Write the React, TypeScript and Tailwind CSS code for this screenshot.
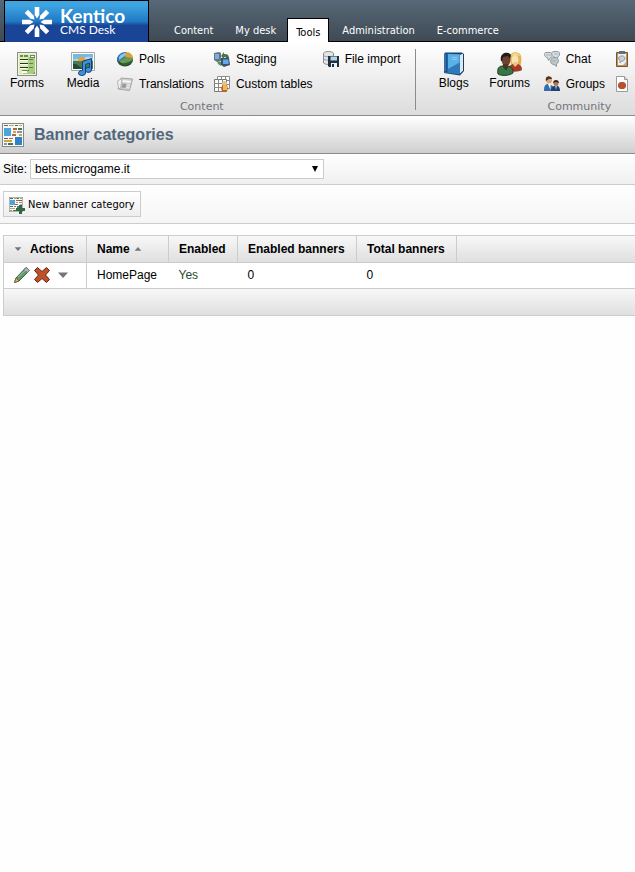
import type { ReactNode } from "react";

const ARIAL = "font-['Liberation_Sans',Arial,sans-serif]";
const TAHOMA = "font-['DejaVu_Sans_Condensed','DejaVu_Sans',Tahoma,sans-serif]";

const TABS = ["Content", "My desk", "Tools", "Administration", "E-commerce"];

function LogoMark() {
  return (
    <svg viewBox="0 0 30 30" className="h-[30px] w-[30px] shrink-0" fill="#fff">
      {[0, 45, 90, 135, 180, 225, 270, 315].map((a) => (
        <path key={a} d="M12.700 0h4.600v8L15 11.500 12.700 8z" transform={`rotate(${a} 15 15)`} />
      ))}
    </svg>
  );
}

function FormsIcon() {
  return (
    <svg viewBox="0 0 20 24" className="h-6 w-5" shapeRendering="crispEdges">
      <path d="M0.5 0.5h19v23h-19z" fill="#f0f3dc" stroke="#8c8f88" />
      <path d="M2 2h16v20H2z" fill="#dcebae" />
      <path d="M11 5h7v17H6v-3h5z" fill="#a8cc80" />
      <path d="M3 3h3v2H3zM7 3h4v2H7z" fill="#6d8a5f" />
      <path d="M13 3h4v2h-4z" fill="#fff" stroke="#6d8a5f" />
      <path d="M3 7h8v1H3zM3 11h8v1H3zM3 15h8v1H3z" fill="#25351f" />
      <path d="M3 8h8v1H3zM3 12h8v1H3zM3 16h6v1H3z" fill="#fff" />
      <path d="M12 7h4v1h-4zM12 11h4v1h-4zM12 15h4v1h-4zM5 18h7v1H5z" fill="#5f8250" />
      <path d="M5 19h5v2H5z" fill="#fff" />
      <path d="M15 22h3v-3z" fill="#7f9b62" />
    </svg>
  );
}

function MediaIcon() {
  return (
    <svg viewBox="0 0 24 24" className="h-6 w-6">
      <path d="M0.5 0.5h23v18h-23z" fill="#fff" stroke="#a5a8ab" />
      <path d="M2 2h20v9H2z" fill="#74b9de" />
      <path d="M2 8c3-3 5 0 8-1s6-4 12-1v4H2z" fill="#b7dbeb" />
      <path d="M7 8c0-4 7-4 8 0v2H7z" fill="#ee9c3a" />
      <path d="M2 9c4-1 6 1 9 0s7-2 11 0v8H2z" fill="#4a7a50" />
      <path d="M2 12c4-1 6 3 10 5H2z" fill="#254a37" />
      <path
        d="M11.500 9.500l9-3v11.500a3 2.500 0 1 1-2-2.500V11l-4 1.500v8.500a3.500 2.500 0 1 1-3-2.500z"
        fill="#3e92db"
        stroke="#153f75"
      />
    </svg>
  );
}

function BlogsIcon() {
  return (
    <svg viewBox="0 0 22 24" className="h-6 w-[22px]">
      <path d="M2 0.500h17l2 1.500v17l-4 4.500-16-2.500z" fill="#17406d" />
      <path d="M17 3l3-1.500v17l-3 3z" fill="#dfe8ee" />
      <path d="M1 1.500L17 2v20.500L1 20.500z" fill="#2f79b8" />
      <path d="M5 2l11.500.5v8L5 17z" fill="#5bb0e6" />
      <path d="M9 5.500h5M9 7.500h5" stroke="#8accf1" />
      <path d="M1 1.500h3.500v19l-3.500-.5z" fill="#1b5288" />
      <path d="M2 2v17" stroke="#4c93ca" />
    </svg>
  );
}

function ForumsIcon() {
  return (
    <svg viewBox="0 0 26 24" className="h-6 w-[26px]">
      <path d="M13 5c0-6 10-6 11-1 1 4 0 8-1 11l-9-1z" fill="#e3b254" />
      <ellipse cx="18" cy="8" rx="3.500" ry="5" fill="#f8e2b0" />
      <path d="M14 4c1-4 8-4 9 0l-5-1z" fill="#f5d886" />
      <path d="M12 14l4-2h5c3 1 4 3 4 6-3 2-9 2-13 1z" fill="#a33b26" />
      <path d="M16 12l2 3 3-3-1-2h-3z" fill="#efc48b" />
      <ellipse cx="9" cy="8" rx="4.500" ry="6" fill="#6f4230" />
      <path d="M4 9C2 0 12-1 14 3l-1 4-2-3-5 1-1 4z" fill="#1f1c1c" />
      <path d="M6 12h5v5l-2 2-3-3z" fill="#553126" />
      <path d="M1 22c-1-6 1-8 5-8l3 4 2-4c4 1 5 3 5 7-4 3-12 3-15 1z" fill="#3b7445" stroke="#1d4025" />
    </svg>
  );
}

function PollsIcon() {
  return (
    <svg viewBox="0 0 16 16" className="h-4 w-4">
      <ellipse cx="8" cy="9" rx="8" ry="6.500" fill="#254c31" />
      <path d="M0 9c0-5 4-8 9-8l1 4-8 6z" fill="#2f74b0" />
      <path d="M2 6c2-3 4-4 7-4l.5 2L2 9z" fill="#8bc6e8" />
      <path d="M9 1c4 0 7 3 7 6l-8 1z" fill="#dda236" />
      <path d="M2 10l7-4 7 1c0 5-9 9-14 3z" fill="#6a9a54" />
      <path d="M4 13l8-2 3-2c-1 5-8 7-11 4z" fill="#315f38" />
    </svg>
  );
}

function TranslationsIcon() {
  return (
    <svg viewBox="0 0 16 16" className="h-4 w-4">
      <path d="M4 2l11.500 1-3 11.500L1 13z" fill="#cfcfcf" stroke="#a5a5a5" />
      <path d="M0.500 5L5 2.500 3.500 13l-2-1z" fill="#f0f0f0" stroke="#b5b5b5" />
      <path d="M6 4l8 1-.4 2-8-1z" fill="#f7f7f7" />
      <path d="M5.500 7.500l4 .5-1 4-4-.5z" fill="#9a9a9a" />
      <path d="M10 9l3 .4M9.500 11.500l3 .4" stroke="#f4f4f4" />
    </svg>
  );
}

function StagingIcon() {
  return (
    <svg viewBox="0 0 16 16" className="h-4 w-4">
      <path d="M0 2l5-1 2 1v8l-4 1-3-2z" fill="#667583" />
      <path d="M1 3h4v5H1z" fill="#7eaedb" />
      <path d="M7 5l3-4v2c4 0 5 1 5 5h-3V6h-2v2z" fill="#44784c" />
      <path d="M7 7l8-.5 1 7.500-6 2-3-2z" fill="#3f5265" />
      <path d="M9 8.500h5.500v4.500H9z" fill="#5eacec" />
      <path d="M3 10l4 1v4l-3-2z" fill="#579459" />
    </svg>
  );
}

function CustomTablesIcon() {
  return (
    <svg viewBox="0 0 16 16" className="h-4 w-4">
      <path d="M3.500 0.500h12v12h-12z" fill="#fff" stroke="#8e8e8e" />
      <path d="M0.500 3.500h12v12H0.500z" fill="#fff" stroke="#777" />
      <path d="M0 7.500h13M0 11.500h13M4.500 3v13M8.500 3v13M7.500 0v3M11.500 0v3M13 4.500h3M13 8.500h3" stroke="#888" />
      <path d="M7 12l2-4 4 1 1 4-2 3H8z" fill="#b9642f" />
      <circle cx="10.500" cy="7.500" r="2.500" fill="#e7c08a" />
      <path d="M9 10h4v4H9z" fill="#f0be46" />
    </svg>
  );
}

function FileImportIcon() {
  return (
    <svg viewBox="0 0 16 16" className="h-4 w-4">
      <path d="M0.500 2c2-2 8-2 10 0v10c-3 2-7 2-10 0z" fill="#e3e5e7" stroke="#8a8e92" />
      <path d="M1 5c3 1 6 1 9 0M1 8.500c3 1 6 1 9 0" stroke="#9da2a7" fill="none" />
      <path d="M5 5h11v11H6l-1-1z" fill="#1f3140" />
      <path d="M7.500 5.500H14v4H7.500z" fill="#b5d3e6" />
      <path d="M8 12h6v4H8z" fill="#eef1f3" />
      <path d="M9 13h2v3H9z" fill="#1f3140" />
    </svg>
  );
}

function ChatIcon() {
  return (
    <svg viewBox="0 0 16 16" className="h-4 w-4" fill="#d9dee1" stroke="#8f989e">
      <path d="M1.500 1.500h5c3 1 2 5 0 5l-2 3-1-3c-3 0-4-4-2-5z" />
      <path d="M9.500 0.500h4c3 0 2.500 5 0 5.500l-1 2.500-2-2.500c-3 0-4-5-1-5.500z" />
      <path d="M7.500 7.500c3-2 7-1 7 2 0 2-1 3-2 3.500v2.500l-2.500-2c-4 0-4-4-2.500-6z" fill="#bcc6cb" />
      <path d="M2 4h5M10 3h4M8 10h4" stroke="#a9b1b6" />
    </svg>
  );
}

function GroupsIcon() {
  return (
    <svg viewBox="0 0 16 16" className="h-4 w-4">
      <circle cx="5" cy="4.500" r="3" fill="#e0a873" />
      <path d="M2 5c-2-6 6-6 6-2L5 3z" fill="#57341f" />
      <path d="M0 15c0-5 1-7 4-7l3 1 3 2v4z" fill="#346eae" />
      <path d="M4 8h2.500v6z" fill="#fff" />
      <circle cx="12" cy="7.500" r="2.500" fill="#b6794c" />
      <path d="M9 7c0-4 6-4 6 0l-3-1z" fill="#33251e" />
      <path d="M7 15c0-4 2-5 4-5h2c2 0 3 2 3 5z" fill="#203f6b" />
      <path d="M11 10h2l-1 4z" fill="#8cc4ee" />
    </svg>
  );
}

function ClipboardIcon() {
  return (
    <svg viewBox="0 0 14 16" className="h-4 w-3.5">
      <path d="M1.500 1.500h11v14h-11z" fill="#c69450" stroke="#6f563c" />
      <path d="M3 3h8v11H3z" fill="#eff1f2" />
      <path d="M4 0h6v3H4z" fill="#666e73" />
      <path d="M4 6c2-2 6-1 6 1s-1 3-3 3l-2 2V9.500C4 9 3 7 4 6z" fill="#c7d0d5" stroke="#8e999f" />
      <path d="M8 14h3v-3z" fill="#aaa" />
    </svg>
  );
}

function ReportIcon() {
  return (
    <svg viewBox="0 0 14 16" className="h-4 w-3.5">
      <path d="M1.500 0.500h8l3 3v12h-11z" fill="#fff" stroke="#9a9a9a" />
      <path d="M9.500 0.500v3h3" fill="#ddd" stroke="#9a9a9a" />
      <path d="M5 6h4l2 2v3l-2 2H5l-2-2V8z" fill="#b9512b" />
    </svg>
  );
}

function BannerIcon({ className }: { className: string }) {
  return (
    <svg viewBox="0 0 22 24" className={className} shapeRendering="crispEdges">
      <path d="M0.500 0.500h21v23h-21z" fill="#f7f8f8" stroke="#85898c" />
      <path d="M2 5h7v8H2z" fill="#4ba4dc" />
      <path d="M13 14h7v8h-7z" fill="#2f82c4" />
      <path d="M2 2h4v1H2zM13 2h3v1h-3zM16 5h4v2h-4zM2 15h4v1H2zM6 20h5v2H6z" fill="#4e6f50" />
      <path d="M11 5h4v2h-4zM10 11h4v2h-4zM7 15h4v1H7z" fill="#b06447" />
      <path d="M7 2h5v1H7zM17 2h3v1h-3zM11 8h3v2h-3zM17 11h3v2h-3zM2 17h8v2H2z" fill="#cda250" />
      <path d="M15 8h5v2h-5zM2 20h3v2H2z" fill="#8d959c" />
    </svg>
  );
}

function AddBannerIcon() {
  return (
    <span className="relative block h-4 w-[15px] shrink-0">
      <BannerIcon className="h-[15px] w-3.5" />
      <svg viewBox="0 0 9 9" className="absolute -right-px -bottom-px h-[9px] w-[9px]">
        <path d="M3 0h3v3h3v3H6v3H3V6H0V3h3z" fill="#356744" />
      </svg>
    </span>
  );
}

function EditIcon() {
  return (
    <svg viewBox="0 0 16 16" className="h-4 w-4">
      <path d="M12 0.500l3.500 3L5 14l-4.500 1.500L2 11z" fill="#5f9a68" stroke="#47584b" />
      <path d="M12 0.500l3.500 3-2 2-3.500-3z" fill="#b5b8bd" stroke="#77747b" />
      <path d="M4 10l8-7" stroke="#9bc8a0" />
      <path d="M2 11l3 3-4.500 1.500z" fill="#dfb36a" stroke="#806644" />
    </svg>
  );
}

function DeleteIcon() {
  return (
    <svg viewBox="0 0 16 16" className="h-4 w-4">
      <path
        d="M3.500 0.500L8 4.500l4.500-4 3 3L11.500 8l4 4.500-3 3L8 11.500l-4.500 4-3-3L4.500 8l-4-4.500z"
        fill="#bf4f24"
        stroke="#5e2418"
        strokeLinejoin="round"
      />
    </svg>
  );
}

function DownArrow({ className }: { className: string }) {
  return (
    <svg viewBox="0 0 10 6" className={className}>
      <path d="M0 0.500h10L5 6z" fill="#74747b" />
    </svg>
  );
}

function BigButton({ icon, label }: { icon: ReactNode; label: string }) {
  return (
    <button type="button" className="flex w-[54px] shrink-0 flex-col items-center pt-1.5">
      {icon}
      <span className="text-xs leading-[14px]">{label}</span>
    </button>
  );
}

function SmallButton({ icon, label }: { icon: ReactNode; label?: string }) {
  return (
    <button type="button" className="flex h-[25px] items-center gap-1.5 pr-[3px] pl-[5px] text-xs whitespace-nowrap">
      {icon}
      {label}
    </button>
  );
}

function RibbonGroup({ title, children }: { title: string; children: ReactNode }) {
  return (
    <section className="flex shrink-0 flex-col">
      <div className="flex items-start gap-0.5">{children}</div>
      <h2 className="pt-1 text-center font-['DejaVu_Sans',Verdana,sans-serif] text-[11px] leading-[14px] text-[#72747c]">
        {title}
      </h2>
    </section>
  );
}

function Header() {
  return (
    <header className="flex h-[42px] items-end border-b border-black bg-linear-to-b from-[#586878] to-[#3f4a54] pl-1">
      <a
        href="#"
        className="-mb-px flex h-[42px] w-[145px] shrink-0 items-center gap-2 border border-b-0 border-black bg-linear-to-b from-[#3fa5e2] from-10% via-[#2079c4] via-50% to-[#1a4597] to-60% pl-[17px] text-white"
      >
        <LogoMark />
        <span className="flex flex-col pt-0.5 font-[Lato,sans-serif]">
          <span className="text-[19px] leading-[15px] font-bold">Kentico</span>
          <span className="text-xs leading-[14px]">CMS Desk</span>
        </span>
      </a>
      <nav className={`-mb-px ml-3.5 flex items-end text-[11px] whitespace-nowrap ${TAHOMA}`}>
        {TABS.map((tab) =>
          tab === "Tools" ? (
            <a
              key={tab}
              href="#"
              className="mr-0.5 h-6 border border-b-0 border-black bg-white px-2 leading-[28px] text-black"
            >
              {tab}
            </a>
          ) : (
            <a key={tab} href="#" className="h-6 px-[11px] leading-[25px] text-white">
              {tab}
            </a>
          ),
        )}
      </nav>
    </header>
  );
}

function Ribbon() {
  return (
    <div className="flex h-[74px] overflow-hidden border-b border-[#8c8c8c] bg-linear-to-b from-white to-[#dcdcdc] pt-1">
      <RibbonGroup title="Content">
        <BigButton icon={<FormsIcon />} label="Forms" />
        <BigButton icon={<MediaIcon />} label="Media" />
        <div>
          <SmallButton icon={<PollsIcon />} label="Polls" />
          <SmallButton icon={<TranslationsIcon />} label="Translations" />
        </div>
        <div>
          <SmallButton icon={<StagingIcon />} label="Staging" />
          <SmallButton icon={<CustomTablesIcon />} label="Custom tables" />
        </div>
        <SmallButton icon={<FileImportIcon />} label="File import" />
      </RibbonGroup>
      <div className="mx-[11px] mt-[3px] h-[61px] w-px shrink-0 bg-[#8c8c8c]" />
      <RibbonGroup title="Community">
        <BigButton icon={<BlogsIcon />} label="Blogs" />
        <BigButton icon={<ForumsIcon />} label="Forums" />
        <div>
          <SmallButton icon={<ChatIcon />} label="Chat" />
          <SmallButton icon={<GroupsIcon />} label="Groups" />
        </div>
        <div className="w-[122px]">
          <SmallButton icon={<ClipboardIcon />} />
          <SmallButton icon={<ReportIcon />} />
        </div>
      </RibbonGroup>
    </div>
  );
}

function BannerTable() {
  const th = "border-r border-[#ccc] px-2.5 text-left font-bold whitespace-nowrap";
  const td = "px-2.5 pb-0.5";
  return (
    <table className="ml-[3px] w-[calc(100%-3px)] border-collapse border border-r-0 border-[#ccc] text-xs">
      <thead>
        <tr className="h-[27px] bg-linear-to-b from-[#f8f8f8] to-[#dedede]">
          <th className={`${th} w-[83px]`}>
            <span className="flex items-center gap-2">
              <DownArrow className="h-1 w-2" />
              Actions
            </span>
          </th>
          <th className={`${th} w-[82px]`}>
            <span className="flex items-center gap-1">
              Name
              <DownArrow className="h-1 w-2 rotate-180" />
            </span>
          </th>
          <th className={`${th} w-[69px]`}>Enabled</th>
          <th className={`${th} w-[119px]`}>Enabled banners</th>
          <th className={`${th} w-[100px]`}>Total banners</th>
          <th />
        </tr>
      </thead>
      <tbody>
        <tr className="h-[26px] border-y border-[#ccc] bg-white">
          <td className={`${td} border-r border-[#ccc]`}>
            <span className="flex items-center gap-1">
              <button type="button" aria-label="Edit">
                <EditIcon />
              </button>
              <button type="button" aria-label="Delete">
                <DeleteIcon />
              </button>
              <button type="button" aria-label="Other actions" className="pl-1">
                <DownArrow className="h-1.5 w-2.5" />
              </button>
            </span>
          </td>
          <td className={td}>HomePage</td>
          <td className={`${td} text-[#264a2b]`}>Yes</td>
          <td className={td}>0</td>
          <td className={td}>0</td>
          <td />
        </tr>
      </tbody>
      <tfoot>
        <tr className="h-[27px] bg-linear-to-b from-[#f8f8f8] to-[#dedede]">
          <td colSpan={6} />
        </tr>
      </tfoot>
    </table>
  );
}

export default function App() {
  return (
    <div className={`min-h-screen overflow-hidden bg-[#fefefe] text-black ${ARIAL}`}>
      <Header />
      <Ribbon />
      <div className="flex h-[38px] items-center gap-2.5 border-b border-[#8c8c8c] bg-linear-to-b from-white to-[#cfcfcf] pl-0.5">
        <BannerIcon className="h-6 w-[22px]" />
        <h1 className="text-base font-bold text-[#52677c]">Banner categories</h1>
      </div>
      <div className="flex h-[31px] items-center gap-[3px] border-b border-[#ccc] bg-linear-to-b from-white to-[#f0f0f0] pl-[3px] text-xs">
        <label htmlFor="site">Site:</label>
        <div className="relative">
          <select id="site" className="h-5 w-[294px] appearance-none border border-[#ccc] bg-white pl-1">
            <option>bets.microgame.it</option>
          </select>
          <svg viewBox="0 0 6 6" className="pointer-events-none absolute top-[7px] right-1.5 h-1.5 w-1.5">
            <path d="M0 0h6L3 6z" />
          </svg>
        </div>
      </div>
      <div className="border-b border-[#ccc] bg-linear-to-b from-white to-[#f5f5f5] px-[3px] py-1.5">
        <button
          type="button"
          className={`flex h-[26px] items-center gap-1 border border-[#ccc] bg-linear-to-b from-white to-[#eee] px-[5px] pt-0.5 text-[11px] ${TAHOMA}`}
        >
          <AddBannerIcon />
          New banner category
        </button>
      </div>
      <main className="pt-[11px]">
        <BannerTable />
      </main>
    </div>
  );
}
